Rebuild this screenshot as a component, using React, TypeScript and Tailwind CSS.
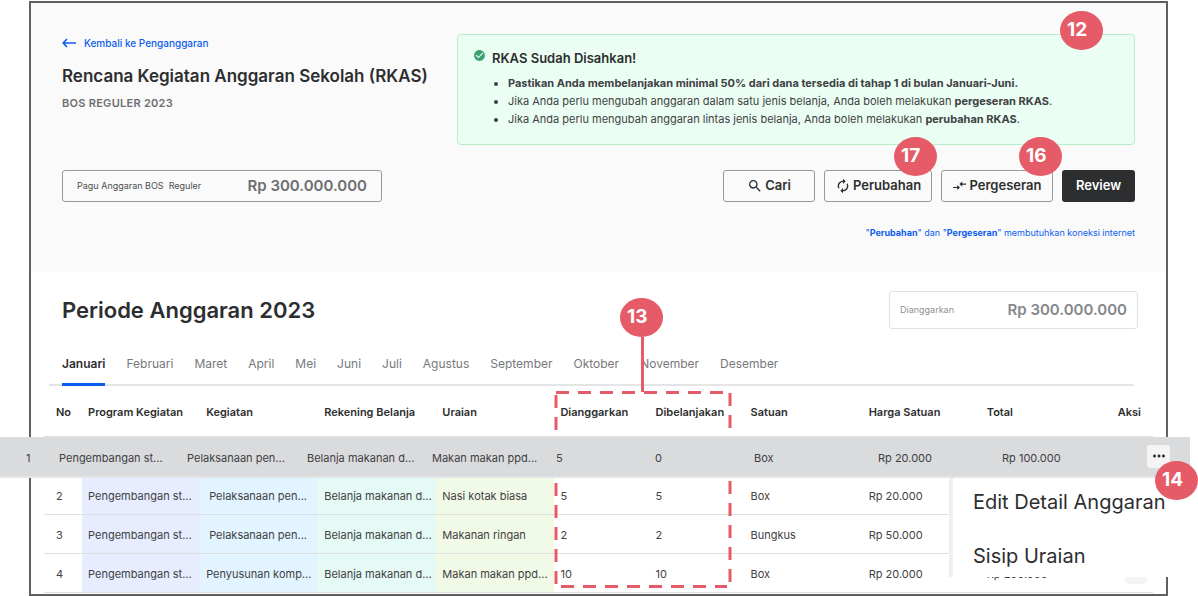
import React from "react";
import { MdAutorenew, MdCheckCircle, MdMoreHoriz, MdSearch } from "react-icons/md";

const months = [
  "Januari",
  "Februari",
  "Maret",
  "April",
  "Mei",
  "Juni",
  "Juli",
  "Agustus",
  "September",
  "Oktober",
  "November",
  "Desember",
];

const columns = [
  { label: "No", width: "w-[38px]" },
  { label: "Program Kegiatan", width: "w-[118px]" },
  { label: "Kegiatan", width: "w-[118px]" },
  { label: "Rekening Belanja", width: "w-[118px]" },
  { label: "Uraian", width: "w-[118px]" },
  { label: "Dianggarkan", width: "w-[95px]" },
  { label: "Dibelanjakan", width: "w-[95px]" },
  { label: "Satuan", width: "w-[118px]" },
  { label: "Harga Satuan", width: "w-[118px]" },
  { label: "Total", width: "w-[118px]" },
];

const rows = [
  {
    no: 2,
    program: "Pengembangan st...",
    kegiatan: "Pelaksanaan pen...",
    rekening: "Belanja makanan d...",
    uraian: "Nasi kotak biasa",
    dianggarkan: 5,
    dibelanjakan: 5,
    satuan: "Box",
    harga: "Rp 20.000",
    total: "",
  },
  {
    no: 3,
    program: "Pengembangan st...",
    kegiatan: "Pelaksanaan pen...",
    rekening: "Belanja makanan d...",
    uraian: "Makanan ringan",
    dianggarkan: 2,
    dibelanjakan: 2,
    satuan: "Bungkus",
    harga: "Rp 50.000",
    total: "",
  },
  {
    no: 4,
    program: "Pengembangan st...",
    kegiatan: "Penyusunan komp...",
    rekening: "Belanja makanan d...",
    uraian: "Makan makan ppd...",
    dianggarkan: 10,
    dibelanjakan: 10,
    satuan: "Box",
    harga: "Rp 20.000",
    total: "Rp 200.000",
  },
];

function Marker({ children, className }: { children: React.ReactNode; className: string }) {
  return (
    <span
      className={`absolute z-20 flex h-[39px] w-[43px] items-center rounded-[50%] bg-[#e55b67] pl-[7px] text-[19px] font-bold text-white ${className}`}
    >
      {children}
    </span>
  );
}

function Header() {
  return (
    <header className="bg-[#fafafa] pt-[31px] pr-[31px] pb-[31px] pl-[31px]">
      <div className="flex items-start justify-between gap-4">
        <div>
          <a href="#" className="flex h-[18px] items-center gap-2 text-[10px] font-medium text-[#0d5cf0]">
            <svg width="14" height="10" viewBox="0 0 14 10" fill="none" stroke="currentColor" strokeWidth="1.6">
              <path d="M14 5H1.5M5 1 1.2 5 5 9" />
            </svg>
            Kembali ke Penganggaran
          </a>
          <h1 className="mt-3 text-[17px] font-semibold leading-6 whitespace-nowrap text-[#2d2e30]">
            Rencana Kegiatan Anggaran Sekolah (RKAS)
          </h1>
          <p className="mt-[7px] text-[11px] font-semibold leading-4 tracking-wide text-[#6d6e71]">
            BOS REGULER 2023
          </p>
        </div>

        <div className="relative flex h-[111px] w-[678px] shrink-0 gap-[6px] rounded border border-[#b9ecca] bg-[#ebfef3] pt-[13px] pl-[15px]">
          <MdCheckCircle className="mt-px size-[13px] shrink-0 text-[#3fa071]" />
          <div>
            <h2 className="text-[13px] font-semibold leading-5 text-[#2d2e30]">RKAS Sudah Disahkan!</h2>
            <ul className="mt-[6px] list-disc pl-4 text-[11px] leading-[18px] text-[#3f4144]">
              <li className="font-bold">
                Pastikan Anda membelanjakan minimal 50% dari dana tersedia di tahap 1 di bulan Januari-Juni.
              </li>
              <li>
                Jika Anda perlu mengubah anggaran dalam satu jenis belanja, Anda boleh melakukan{" "}
                <strong>pergeseran RKAS</strong>.
              </li>
              <li>
                Jika Anda perlu mengubah anggaran lintas jenis belanja, Anda boleh melakukan{" "}
                <strong>perubahan RKAS</strong>.
              </li>
            </ul>
          </div>
          <Marker className="-top-6 right-[31px]">12</Marker>
        </div>
      </div>

      <div className="mt-[25px] flex items-center justify-between">
        <div className="flex h-8 w-80 items-center justify-between rounded-[3px] border border-[#97989b] px-[14px]">
          <span className="whitespace-pre text-[9px] text-[#4c4d50]">Pagu Anggaran BOS  Reguler</span>
          <span className="text-[15px] font-semibold text-[#6d6e71]">Rp 300.000.000</span>
        </div>

        <div className="flex gap-[9px] text-[13px] font-semibold text-[#2d2e30]">
          <button className="flex h-8 w-[92px] items-center justify-center gap-[2px] rounded-[3px] border border-[#97989b]">
            <MdSearch className="size-4" />
            Cari
          </button>
          <button className="relative flex h-8 w-[108px] items-center justify-center gap-[2px] rounded-[3px] border border-[#97989b]">
            <MdAutorenew className="size-4" />
            Perubahan
            <Marker className="-top-[34px] -right-[6px]">17</Marker>
          </button>
          <button className="relative flex h-8 w-[112px] items-center justify-center gap-1 rounded-[3px] border border-[#97989b]">
            <svg width="13" height="10" viewBox="0 0 13 10" fill="currentColor">
              <path d="M0 5.9h4.2V3.9L7 6.5 4.2 9.1v-2H0zM13 2.5H9.2V.5L6.4 3.1l2.8 2.6v-2H13z" />
            </svg>
            Pergeseran
            <Marker className="-top-[34px] -right-[10px]">16</Marker>
          </button>
          <button className="h-8 w-[73px] rounded-[3px] bg-[#2d2e30] text-white">Review</button>
        </div>
      </div>

      <p className="mt-[23px] text-right text-[9px] leading-4 text-[#0d5cf0]">
        "<strong>Perubahan</strong>" dan "<strong>Pergeseran</strong>" membutuhkan koneksi internet
      </p>
    </header>
  );
}

// Row lifted out of the table, wider than the frame, with its action menu open
function ActiveRow() {
  return (
    <div className="relative z-10 -mr-[37px] -ml-11 grid h-[41px] grid-cols-[33fr_128fr_120fr_125fr_124fr_99fr_99fr_124fr_124fr_145fr_23px] items-center border-b-2 border-[#e3e4e6] bg-[#dadbdd] pt-1 pr-5 pl-[26px]">
      <span>1</span>
      <span>Pengembangan st...</span>
      <span>Pelaksanaan pen...</span>
      <span>Belanja makanan d...</span>
      <span>Makan makan ppd...</span>
      <span>5</span>
      <span>0</span>
      <span>Box</span>
      <span>Rp 20.000</span>
      <span>Rp 100.000</span>
      <div className="relative -mt-1">
        <button
          aria-label="Aksi"
          className="flex size-[23px] items-center justify-center rounded-[3px] bg-[#f4f4f5] text-[#2d2e30]"
        >
          <MdMoreHoriz className="size-[18px]" />
        </button>
        <Marker className="top-4 left-2">14</Marker>
      </div>

      <div className="absolute top-full right-0 mt-[2px] flex h-[99px] w-[241px] flex-col border-l-4 border-[#f0f0f0] bg-white pl-5 text-[20px] leading-[54px] text-[#2d2e30]">
        <button className="-mt-[3px] text-left whitespace-nowrap">Edit Detail Anggaran</button>
        <button className="text-left whitespace-nowrap">Sisip Uraian</button>
      </div>
    </div>
  );
}

function Highlight() {
  return (
    <div className="absolute top-1 left-[510px]">
      <svg width="178" height="200" fill="none" stroke="#e55b67" strokeWidth="3">
        <path d="M2 2.5H169" strokeDasharray="13 9" />
        <path d="M2 5V194" strokeDasharray="13 9" />
        <path d="M176 3V194" strokeDasharray="13 9" />
        <path d="M7 196.5H173" strokeDasharray="13 9" />
      </svg>
      <span className="absolute -top-[53px] left-[87px] h-[55px] w-[3px] bg-[#e55b67]" />
      <Marker className="-top-[92px] left-[66px]">13</Marker>
    </div>
  );
}

function BudgetTable() {
  return (
    <div className="relative mr-[13px] ml-[13px] pt-[2px] text-[11px] text-[#3f4144]">
      <table className="w-full table-fixed border-collapse text-left">
        <thead>
          <tr className="h-12 border-b border-[#dfe0e2] text-[#2d2e30]">
            {columns.map((col, i) => (
              <th key={col.label} className={`${col.width} font-semibold whitespace-nowrap ${i === 0 ? "pl-3" : "pl-[6px]"}`}>
                {col.label}
              </th>
            ))}
            <th className="w-[54px] pr-3 text-right font-semibold">Aksi</th>
          </tr>
        </thead>
        <tbody>
          <tr className="h-[39px]">
            <td colSpan={11} className="h-[39px] p-0 align-top">
              <div className="h-[39px]">
                <ActiveRow />
              </div>
            </td>
          </tr>
          {rows.map((row) => (
            <tr key={row.no} className="h-[39px] border-b border-[#dfe0e2] whitespace-nowrap">
              <td className="pt-[3px] pl-3">{row.no}</td>
              <td className="bg-[#e7edff] pt-[3px] pl-[6px]">{row.program}</td>
              <td className={`bg-[#e1f4ff] pt-[3px] ${row.no < 4 ? "pl-[9px]" : "pl-[6px]"}`}>{row.kegiatan}</td>
              <td className="bg-[#e5f9f5] pt-[3px] pl-[6px]">{row.rekening}</td>
              <td className="bg-[#f1f9e7] pt-[3px] pl-[6px]">{row.uraian}</td>
              <td className="pt-[3px] pl-[6px]">{row.dianggarkan}</td>
              <td className="pt-[3px] pl-[6px]">{row.dibelanjakan}</td>
              <td className="pt-[3px] pl-[6px]">{row.satuan}</td>
              <td className="pt-[3px] pl-[6px]">{row.harga}</td>
              <td className="pt-[3px] pl-[6px]">{row.total}</td>
              <td className="pr-[6px]">
                <button aria-label="Aksi" className="ml-auto block h-[22px] w-[22px] rounded-[3px] bg-[#f4f4f5]" />
              </td>
            </tr>
          ))}
        </tbody>
      </table>
      <Highlight />
    </div>
  );
}

function App() {
  return (
    <div className="overflow-hidden bg-white pt-px font-['Inter',sans-serif]">
      <main className="mr-[30px] ml-[29px] border-2 border-[#5f6062] pb-px">
        <Header />

        <div className="flex items-center justify-between pt-[19px] pr-7 pl-[31px]">
          <h2 className="text-[22px] font-semibold text-[#2d2e30]">Periode Anggaran 2023</h2>
          <div className="flex h-[38px] w-[249px] items-center justify-between rounded-[3px] border border-[#dfe0e2] px-[10px]">
            <span className="text-[9px] text-[#8f9194]">Dianggarkan</span>
            <span className="text-[15px] font-semibold text-[#85878a]">Rp 300.000.000</span>
          </div>
        </div>

        <nav className="mt-[19px] mr-8 ml-[18px] flex gap-[21px] border-b-2 border-[#e4e5e7] pl-[13px] text-[12px]">
          {months.map((month, i) => (
            <button
              key={month}
              className={
                i === 0
                  ? "-mb-[2px] h-[38px] border-b-[3px] border-[#0d5cf0] pb-1 font-semibold text-[#2d2e30]"
                  : "h-9 pb-1 text-[#77787b]"
              }
            >
              {month}
            </button>
          ))}
        </nav>

        <BudgetTable />
      </main>
    </div>
  );
}

export default App;
